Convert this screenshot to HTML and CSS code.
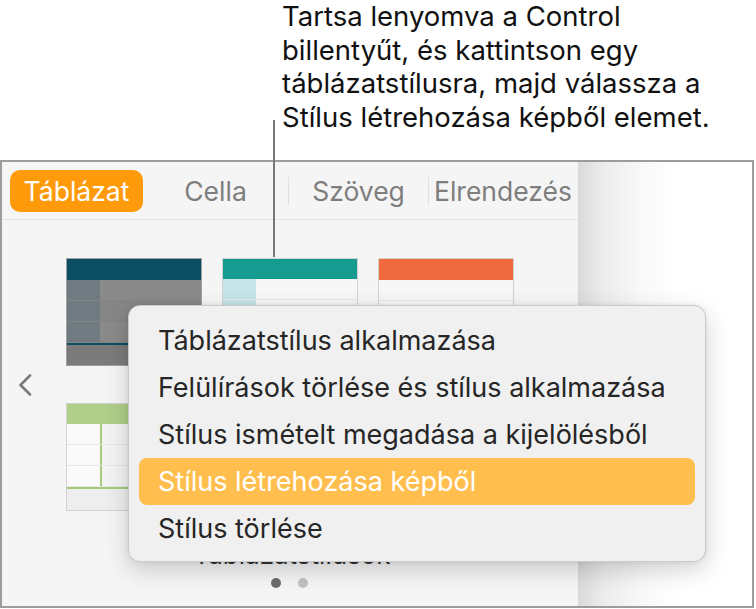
FILE: index.html
```html
<!DOCTYPE html>
<html lang="hu">
<head>
<meta charset="UTF-8">
<meta name="viewport" content="width=device-width, initial-scale=1.0">
<title>Táblázatstílus létrehozása</title>
    <link rel="stylesheet" href="styles.css">
</head>
<body>
    <div class="callout">
        <p class="callout-text">Tartsa lenyomva a Control<br>billentyűt, és kattintson egy<br>táblázatstílusra, majd válassza a<br>Stílus létrehozása képből elemet.</p>
    </div>
    <div class="callout-line"></div>

    <div class="frame">
        <div class="sidebar">
            <div class="tabs">
                <div class="tab tab-active">Táblázat</div>
                <div class="tab tab-cella">Cella</div>
                <div class="tab-sep"></div>
                <div class="tab tab-text">Szöveg</div>
                <div class="tab-sep"></div>
                <div class="tab tab-layout">Elrendezés</div>
            </div>

            <div class="gallery">
                <div class="chevron">
                    <svg width="14" height="22" viewBox="0 0 14 22"><polyline points="12,1.5 2.5,11 12,20.5" fill="none" stroke="#7b7b7b" stroke-width="2.6" stroke-linecap="round" stroke-linejoin="round"/></svg>
                </div>
                <div class="grid">
                    <!-- sötét stílus -->
                    <div class="thumb thumb-dark">
                        <div class="th-head"></div>
                        <div class="th-row"><span class="th-col"></span></div>
                        <div class="th-row"><span class="th-col"></span></div>
                        <div class="th-row"><span class="th-col"></span></div>
                        <div class="th-line"></div>
                        <div class="th-foot"></div>
                    </div>
                    <div class="thumb thumb-teal">
                        <div class="th-head"></div>
                        <div class="th-row"><span class="th-col"></span></div>
                        <div class="th-row"><span class="th-col"></span></div>
                        <div class="th-row"><span class="th-col"></span></div>
                        <div class="th-line"></div>
                        <div class="th-foot"></div>
                    </div>
                    <div class="thumb thumb-orange">
                        <div class="th-head"></div>
                        <div class="th-row"><span class="th-col"></span></div>
                        <div class="th-row"><span class="th-col"></span></div>
                        <div class="th-row"><span class="th-col"></span></div>
                        <div class="th-line"></div>
                        <div class="th-foot"></div>
                    </div>
                    <div class="thumb thumb-green">
                        <div class="th-head"></div>
                        <div class="th-row"><span class="th-col"></span></div>
                        <div class="th-row"><span class="th-col"></span></div>
                        <div class="th-row"><span class="th-col"></span></div>
                        <div class="th-line"></div>
                        <div class="th-foot"></div>
                    </div>
                    <div class="thumb thumb-plain">
                        <div class="th-head"></div>
                        <div class="th-row"><span class="th-col"></span></div>
                        <div class="th-row"><span class="th-col"></span></div>
                        <div class="th-row"><span class="th-col"></span></div>
                        <div class="th-line"></div>
                        <div class="th-foot"></div>
                    </div>
                    <div class="thumb thumb-plain">
                        <div class="th-head"></div>
                        <div class="th-row"><span class="th-col"></span></div>
                        <div class="th-row"><span class="th-col"></span></div>
                        <div class="th-row"><span class="th-col"></span></div>
                        <div class="th-line"></div>
                        <div class="th-foot"></div>
                    </div>
                </div>
            </div>

            <div class="gallery-label">Táblázatstílusok</div>
            <div class="dots">
                <span class="dot dot-on"></span>
                <span class="dot"></span>
            </div>
        </div>
        <div class="canvas"></div>
    </div>

    <ul class="menu">
        <li class="menu-item">Táblázatstílus alkalmazása</li>
        <li class="menu-item">Felülírások törlése és stílus alkalmazása</li>
        <li class="menu-item">Stílus ismételt megadása a kijelölésből</li>
        <li class="menu-item menu-item-hover">Stílus létrehozása képből</li>
        <li class="menu-item">Stílus törlése</li>
    </ul>
</body>
</html>
```

FILE: styles.css
```css
body{
    margin: 0;
    position: relative;
    background: #fff;
    font-family: Inter, "Noto Sans", "Liberation Sans", sans-serif;
    width: 756px;
    height: 609px;
    overflow: hidden;
}

/* felirat a kép tetején */
.callout{
    height: 160px;
    padding-left: 282px;
    box-sizing: border-box;
}
.callout-text{
    margin: 0;
    font-size: 27.5px;
    line-height: 33.5px;
    color: #111;
}
.callout-line{
    position: absolute;
    left: 273px;
    top: 120px;
    width: 2px;
    height: 137px;
    background: #777;
}

.frame{
    display: flex;
    width: 754px;
    height: 448px;
    box-sizing: border-box;
    border: 2px solid #9c9c9c;
}
.sidebar{
    width: 576px;
    background: #f5f5f5;
    display: flex;
    flex-direction: column;
}
.canvas{
    flex: 1;
    background: linear-gradient(90deg, #d9d9d9 0, #ececec 25px, #f9f9f9 65px, #fff 100px);
}

/* fülek */
.tabs{
    height: 57px;
    border-bottom: 1px solid #e3e3e3;
    display: flex;
    align-items: center;
    padding-left: 8px;
}
.tab{
    font-size: 26.5px;
    color: #7e7e7e;
    text-align: center;
    height: 42px;
    line-height: 42px;
}
.tab-active{
    width: 133px;
    background: #ff9a0a;
    color: #fff;
    border-radius: 10px;
}
.tab-cella{ width: 145px; }
.tab-text{ width: 139px; }
.tab-layout{ width: 148px; }
.tab-sep{
    width: 1px;
    height: 28px;
    background: #e0e0e0;
}

/* stílusok rácsa */
.gallery{
    display: flex;
    align-items: center;
    padding: 38px 0 0 16px;
}
.chevron{
    width: 14px;
    height: 22px;
    margin-right: 34px;
}
.grid{
    display: grid;
    grid-template-columns: repeat(3, 136px);
    grid-auto-rows: 108px;
    column-gap: 20px;
    row-gap: 37px;
}
.thumb{
    border: 1px solid #d2d2d2;
    display: flex;
    flex-direction: column;
    background: #f7f7f7;
}
.th-head{ height: 21px; }
.th-row{
    height: 21px;
    display: flex;
    border-bottom: 1px solid #e6e6e6;
    box-sizing: border-box;
}
.th-col{ width: 33px; }
.th-line{ height: 2px; }
.th-foot{ flex: 1; }

.thumb-dark{ border-color: #a0a0a0; background: #8a8a8a; }
.thumb-dark .th-head{ background: #0c4f63; }
.thumb-dark .th-col{ background: #6f7b80; }
.thumb-dark .th-row{ border-bottom-color: #848484; }
.thumb-dark .th-row:nth-child(3){ background: #868686; }
.thumb-dark .th-line{ background: #0c4f63; }
.thumb-dark .th-foot{ background: #7b7b7b; }

.thumb-teal .th-head{ background: #169b90; height: 20px; }
.thumb-teal .th-col{ background: #c4e4e7; }
.thumb-teal .th-line{ background: #d7d7d7; }

.thumb-orange .th-head{ background: #f06a40; }
.thumb-orange .th-line{ background: #e4e4e4; }

.thumb-green .th-head{ background: #b0cf89; height: 20px; }
.thumb-green .th-col{ border-right: 2px solid #a7ca7e; background: #fafafa; }
.thumb-green .th-row{ background: #f3f3f3; }
.thumb-green .th-line{ background: #a7ca7e; }
.thumb-green .th-foot{ background: #eeeeee; }

.thumb-plain .th-head{ background: #d9d9d9; }

.gallery-label{
    margin-top: 28px;
    text-align: center;
    font-size: 26px;
    line-height: 31px;
    color: #333;
    padding-left: 4px;
}
.dots{
    display: flex;
    justify-content: center;
    gap: 17px;
    margin-top: 8px;
    padding-right: 2px;
}
.dot{
    width: 10px;
    height: 10px;
    border-radius: 50%;
    background: #c2c2c2;
}
.dot-on{ background: #6d6d6d; }

/* helyi menü */
.menu{
    position: absolute;
    left: 128px;
    top: 305px;
    width: 578px;
    height: 257px;
    margin: 0;
    padding: 11px 10px;
    box-sizing: border-box;
    list-style: none;
    background: #f0f0f0;
    border: 1px solid #cbcbcb;
    border-radius: 12px;
    box-shadow: 0 8px 24px rgba(0,0,0,0.18), 0 0 4px rgba(0,0,0,0.08);
}
.menu-item{
    height: 47px;
    line-height: 48px;
    padding-left: 19px;
    font-size: 27px;
    color: #262626;
    border-radius: 8px;
}
.menu-item-hover{
    background: #ffbe4e;
    color: #fff;
}
```
